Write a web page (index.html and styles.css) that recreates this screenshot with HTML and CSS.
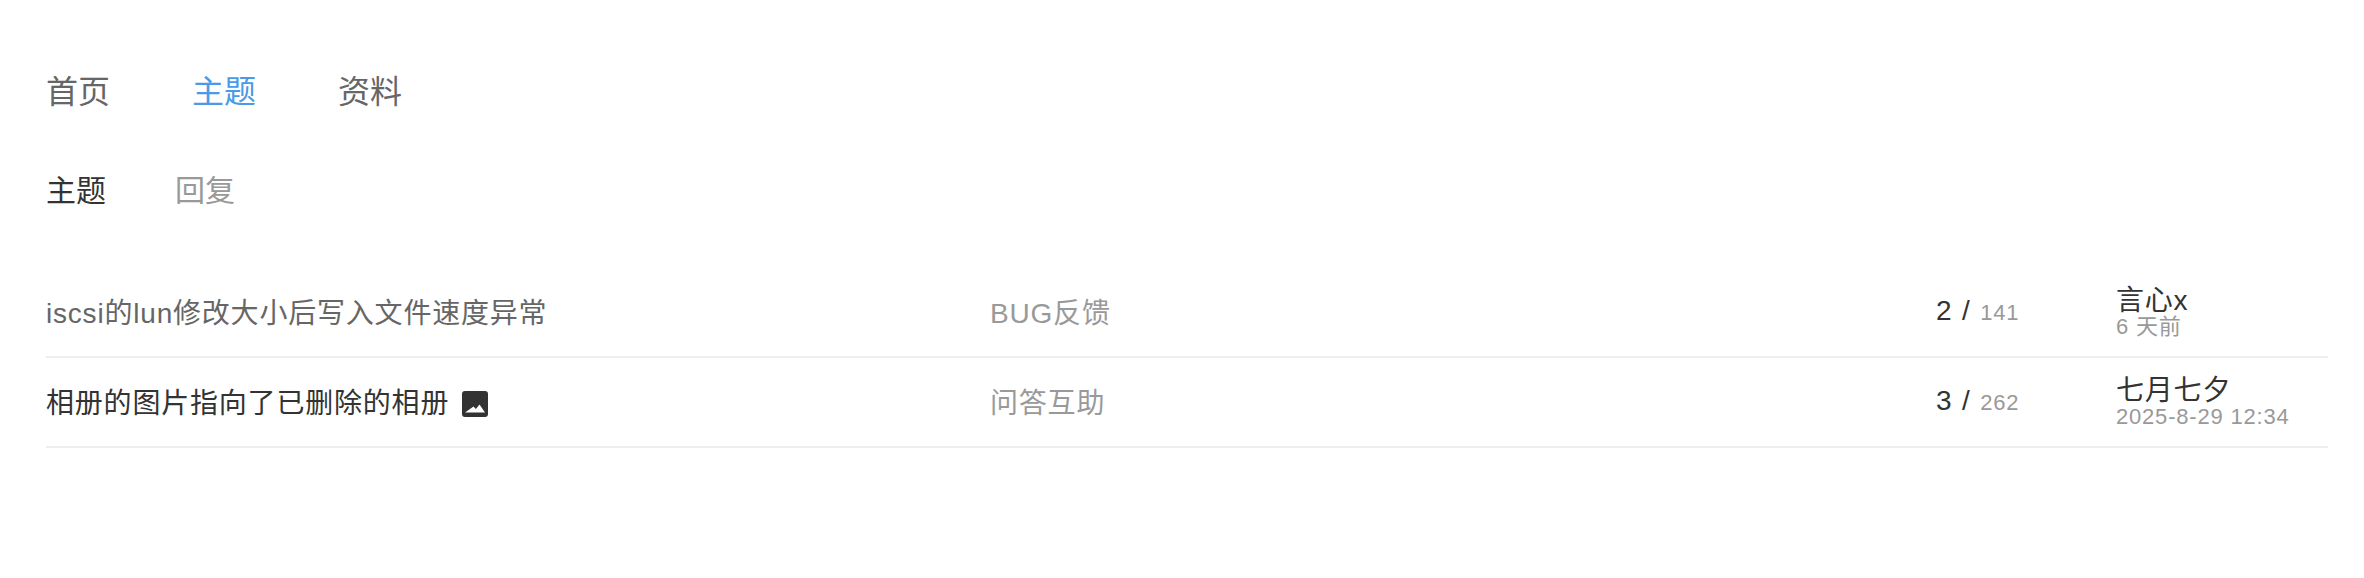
FILE: index.html
```html
<!DOCTYPE HTML>
<html>
<head>
  <meta charset="utf-8">
  <link rel="stylesheet" href="styles.css">
  <title>主题</title>
</head>
<body>
<div class="page">
  <div class="nav">
    <a class="nav-item">首页</a>
    <a class="nav-item active">主题</a>
    <a class="nav-item">资料</a>
  </div>
  <div class="tabs">
    <a class="tab active">主题</a>
    <a class="tab">回复</a>
  </div>
  <div class="list">
    <div class="row">
      <div class="title read">iscsi的lun修改大小后写入文件速度异常</div>
      <div class="cat">BUG反馈</div>
      <div class="stats">2 / <span class="views">141</span></div>
      <div class="last">
        <div class="name">言心x</div>
        <div class="time">6 天前</div>
      </div>
    </div>
    <div class="row">
      <div class="title">相册的图片指向了已删除的相册
        <svg class="pic" viewBox="0 0 26 26"><path fill-rule="evenodd" d="M3 0h20a3 3 0 0 1 3 3v20a3 3 0 0 1-3 3H3a3 3 0 0 1-3-3V3a3 3 0 0 1 3-3zM3 21.5h20l-5.5-8-3.6 4.6-2.4-2.6z"/></svg>
      </div>
      <div class="cat">问答互助</div>
      <div class="stats">3 / <span class="views">262</span></div>
      <div class="last">
        <div class="name">七月七夕</div>
        <div class="time">2025-8-29 12:34</div>
      </div>
    </div>
  </div>
</div>
</body>
</html>
```

FILE: styles.css
```css
html, body {
  margin: 0;
  padding: 0;
  background: #fff;
}

body {
  font-family: "Liberation Sans", "Noto Sans CJK SC", sans-serif;
}

.page {
  padding: 70px 36px 0 46px;
}

.nav {
  display: flex;
  gap: 82px;
  font-size: 32px;
  line-height: 44px;
  color: #666;
}

.nav-item.active {
  color: #4a9ae8;
}

.tabs {
  display: flex;
  gap: 69px;
  margin-top: 55px;
  font-size: 30px;
  line-height: 44px;
  color: #999;
}

.tab.active {
  color: #333;
}

.list {
  margin-top: 55px;
  letter-spacing: 0.8px;
}

.row {
  display: flex;
  align-items: center;
  height: 86px;
  padding-bottom: 2px;
  border-bottom: 2px solid #eee;
}

.title {
  width: 944px;
  font-size: 28px;
  color: #333;
}

.title.read {
  color: #666;
}

.pic {
  width: 26px;
  height: 26px;
  margin-left: 4px;
  vertical-align: -4px;
  fill: #333;
}

.cat {
  width: 946px;
  font-size: 28px;
  color: #999;
}

.stats {
  width: 180px;
  font-size: 28px;
  word-spacing: 1px;
  color: #333;
}

.views {
  font-size: 22px;
  color: #999;
}

.last {
  padding-top: 3px;
}

.name {
  font-size: 28px;
  line-height: 28px;
  color: #333;
}

.time {
  font-size: 22px;
  line-height: 24px;
  color: #999;
}
```
